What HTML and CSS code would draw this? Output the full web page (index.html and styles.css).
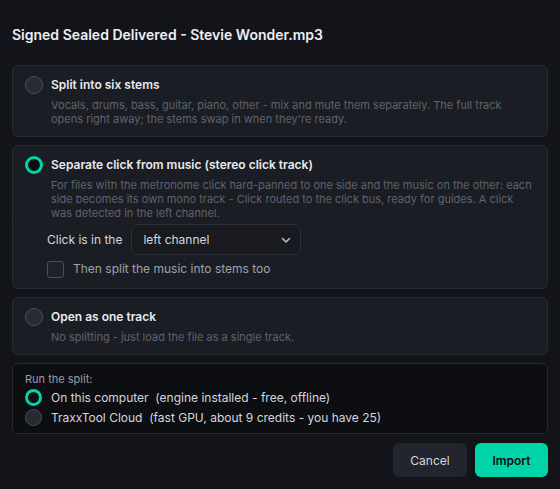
FILE: index.html
```html
<!DOCTYPE html>
<html lang="en">
<head>
    <meta charset="UTF-8">
    <meta name="viewport" content="width=device-width, initial-scale=1.0">
    <title>Import Audio</title>
    <link rel="stylesheet" href="styles.css">
</head>
<body>
    <div class="dialog">
        <h1 class="dialog-title">Signed Sealed Delivered - Stevie Wonder.mp3</h1>

        <div class="options">
            <label class="option">
                <span class="radio"></span>
                <div class="option-body">
                    <div class="option-title">Split into six stems</div>
                    <p class="option-desc">Vocals, drums, bass, guitar, piano, other - mix and mute them separately. The full track opens right away; the stems swap in when they're ready.</p>
                </div>
            </label>

            <div class="option-group">
                <label class="option">
                    <span class="radio checked"></span>
                    <div class="option-body">
                        <div class="option-title">Separate click from music (stereo click track)</div>
                        <p class="option-desc">For files with the metronome click hard-panned to one side and the music on the other: each side becomes its own mono track - Click routed to the click bus, ready for guides. A click was detected in the left channel.</p>
                    </div>
                </label>
                <div class="option-extra">
                    <div class="select-row">
                        <span>Click is in the</span>
                        <div class="select">
                            <span>left channel</span>
                            <svg width="12" height="12" viewBox="0 0 12 12"><path d="M2.5 4.5 6 8l3.5-3.5" fill="none" stroke="#b8bcc6" stroke-width="1.6" stroke-linecap="round" stroke-linejoin="round"/></svg>
                        </div>
                    </div>
                    <label class="check-row">
                        <span class="checkbox"></span>
                        <span>Then split the music into stems too</span>
                    </label>
                </div>
            </div>

            <label class="option">
                <span class="radio"></span>
                <div class="option-body">
                    <div class="option-title">Open as one track</div>
                    <p class="option-desc">No splitting - just load the file as a single track.</p>
                </div>
            </label>

            <div class="engine">
                <div class="engine-label">Run the split:</div>
                <label class="engine-row">
                    <span class="radio small checked"></span>
                    <span>On this computer&nbsp; (engine installed - free, offline)</span>
                </label>
                <label class="engine-row">
                    <span class="radio small"></span>
                    <span>TraxxTool Cloud&nbsp; (fast GPU, about 9 credits - you have 25)</span>
                </label>
            </div>
        </div>

        <div class="actions">
            <button class="btn btn-cancel">Cancel</button>
            <button class="btn btn-primary">Import</button>
        </div>
    </div>
</body>
</html>
```

FILE: styles.css
```css
body {
    margin: 0;
    background-color: #131419;
    font-family: Inter, "Noto Sans", sans-serif;
    color: #e6e8ec;
}

.dialog {
    padding: 24px 12px 12px;
}

.dialog-title {
    margin: 0 0 19px;
    font-size: 14px;
    line-height: 22px;
    font-weight: 600;
    color: #eceef2;
}

.options {
    display: flex;
    flex-direction: column;
    gap: 8px;
}

.option {
    display: flex;
    gap: 8px;
    padding: 10px 12px;
    background-color: #1b1d24;
    border: 1px solid #272a33;
    border-radius: 6px;
}

/* the click-track option carries its controls inside the same card */
.option-group {
    background-color: #1b1d24;
    border: 1px solid #272a33;
    border-radius: 6px;
}

.option-group .option {
    border: none;
    padding-bottom: 4px;
}

.option-extra {
    padding: 0 12px 10px 34px;
    display: flex;
    flex-direction: column;
    gap: 5px;
}

.radio {
    flex: none;
    box-sizing: border-box;
    width: 18px;
    height: 18px;
    border-radius: 50%;
    background-color: #272a33;
    border: 1px solid #4a4e59;
}

.radio.checked {
    background-color: #0d0e12;
    border: 3px solid #00d4a8;
}

.radio.small {
    width: 17px;
    height: 17px;
}

.option-title {
    font-size: 12px;
    line-height: 18px;
    font-weight: 600;
    color: #e8eaee;
}

.option-desc {
    margin: 4px 0 0;
    font-size: 11px;
    line-height: 14px;
    color: #5e636d;
}

.select-row {
    display: flex;
    align-items: center;
    gap: 9px;
    font-size: 12px;
    color: #d4d7dd;
}

.select {
    box-sizing: border-box;
    width: 170px;
    height: 31px;
    display: flex;
    align-items: center;
    justify-content: space-between;
    padding: 0 8px 0 11px;
    background-color: #181a20;
    border: 1px solid #2b2e37;
    border-radius: 6px;
}

.check-row {
    display: flex;
    align-items: center;
    gap: 9px;
    font-size: 12px;
    line-height: 18px;
    color: #9ea2ab;
}

.checkbox {
    box-sizing: border-box;
    width: 17px;
    height: 17px;
    border: 1px solid #4a4e59;
    border-radius: 3px;
    background-color: #1f2128;
}

.engine {
    padding: 8px 12px 6px;
    background-color: #0d0e12;
    border: 1px solid #272a33;
    border-radius: 6px;
}

.engine-label {
    font-size: 11px;
    line-height: 14px;
    color: #9a9ea7;
    margin-bottom: 1px;
}

.engine-row {
    display: flex;
    align-items: center;
    gap: 9px;
    height: 20px;
    font-size: 12px;
    color: #d4d7dd;
}

.actions {
    display: flex;
    justify-content: flex-end;
    gap: 8px;
    margin-top: 9px;
}

.btn {
    height: 34px;
    padding: 0;
    border: none;
    border-radius: 6px;
    font-family: inherit;
    font-size: 12px;
}

.btn-cancel {
    width: 74px;
    background-color: #22252e;
    color: #d4d7dd;
}

.btn-primary {
    width: 73px;
    background-color: #00d4a8;
    color: #0b0f12;
    font-weight: 600;
}
```
